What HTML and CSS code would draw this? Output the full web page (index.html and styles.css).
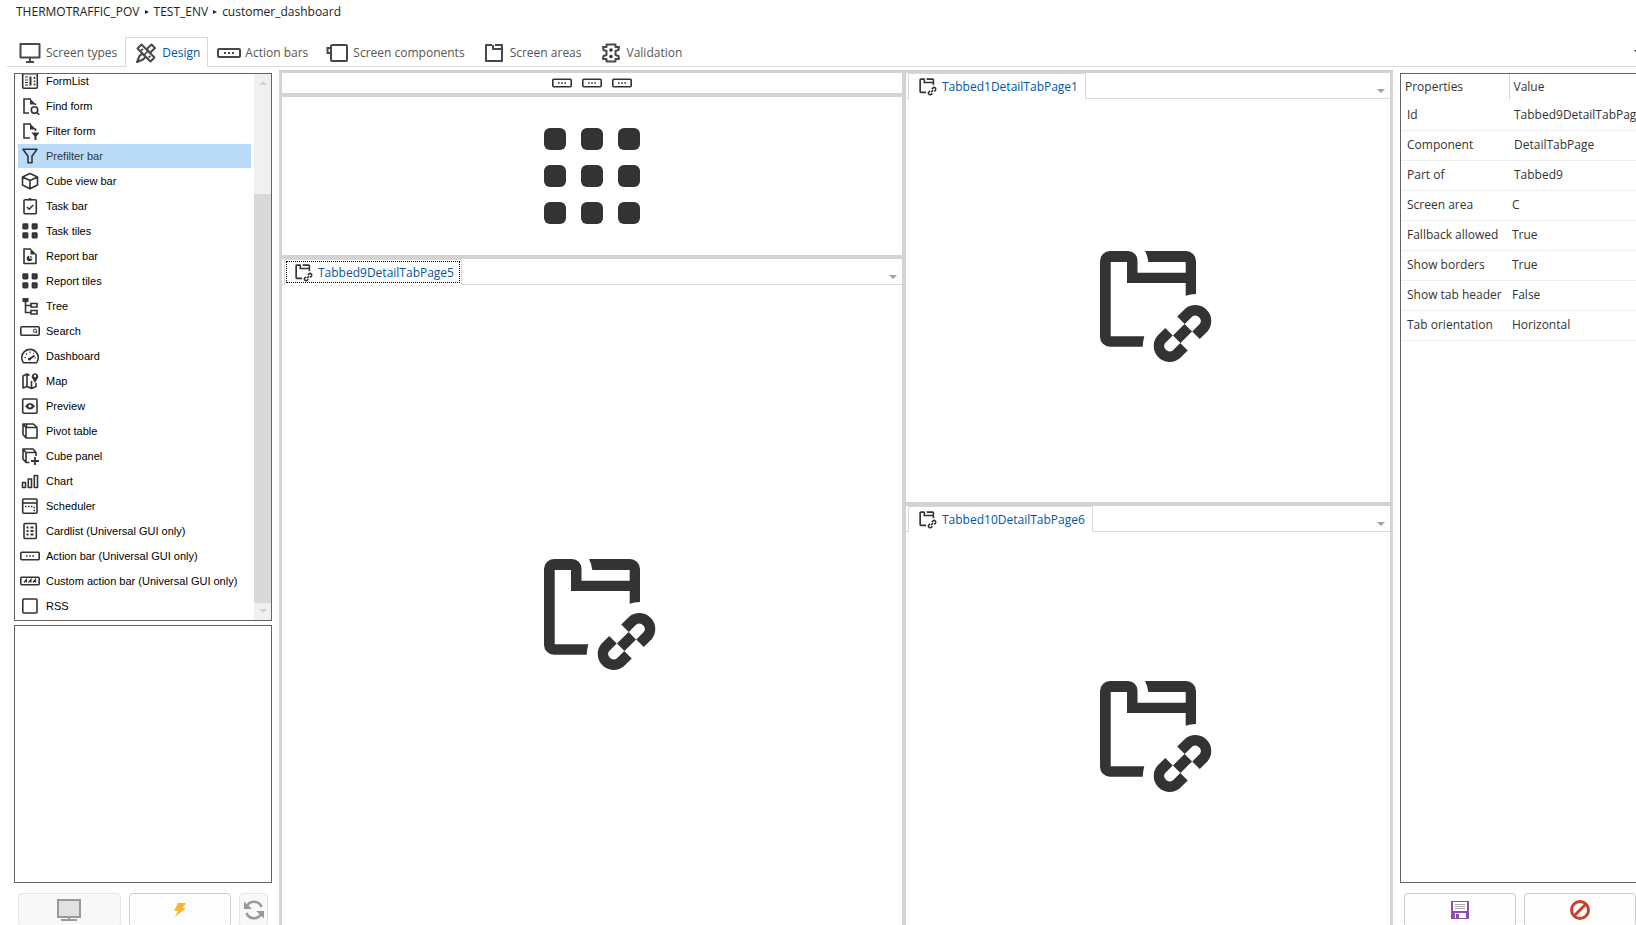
FILE: index.html
```html
<!DOCTYPE html>
<html lang="en">

<head>
    <meta charset="utf-8">
    <title>customer_dashboard</title>
    <meta name="viewport" content="width=device-width, initial-scale=1">
    <link rel="stylesheet" href="styles.css">
</head>

<body>
    <!-- icon sprite -->
    <svg class="sprite" aria-hidden="true">
        <symbol id="i-monitor" viewBox="0 0 24 24"><path d="M2.500 3h19v13.500h-19z" stroke-width="2" stroke-linejoin="round"/><path d="M12 17v4M8 21h8" stroke-width="2"/></symbol>
        <symbol id="i-design" viewBox="0 0 24 24"><path d="M17.500 3.500l3.500 3.500L9 18.500l-6 2.500 2.500-6z" stroke-width="2" stroke-linejoin="round"/><path d="M3.500 7.500l4-4 13 13-4 4z" fill="#fff" stroke-width="2" stroke-linejoin="round"/><path d="M7 9.500L9 8M14.500 16.500l2-1.500M9 15l6-6" stroke-width="1.600"/></symbol>
        <symbol id="i-actions" viewBox="0 0 24 24"><rect x="1" y="8" width="22" height="8" rx="1" stroke-width="2"/><path d="M7 12h2M11 12h2M15 12h2" stroke-width="2"/></symbol>
        <symbol id="i-components" viewBox="0 0 24 24"><rect x="6" y="4" width="16" height="16" rx="1" stroke-width="2"/><path d="M6 7H2.500v5H6" stroke-width="2"/></symbol>
        <symbol id="i-areas" viewBox="0 0 24 24"><path d="M10 4H4v16h16V8h-9V4M13 4h7v4" stroke-width="2" stroke-linejoin="round"/></symbol>
        <symbol id="i-validation" viewBox="0 0 24 24"><path d="M7.500 3.500h9V6H20l-.5 3-3 1v4l3 1 .5 3h-3.500v2.500h-9V18H4l.5-3 3-1v-4l-3-1L4 6h3.500z" stroke-width="2" stroke-linejoin="round"/><circle cx="12" cy="9" r="1.800" class="solid"/><circle cx="12" cy="15.500" r="1.800" class="solid"/></symbol>

        <symbol id="i-formlist" viewBox="0 0 20 20"><rect x="2.700" y="2.700" width="14.600" height="14.600" rx="1"/><path d="M5 6h3M5 9h3M5 11.500h3M5 14h3" stroke-width="1.200"/><path d="M10.500 5.500v9" stroke-width="2"/><path d="M14.500 6v2M14.500 9.500v1.500M14.500 12.500v2"/></symbol>
        <symbol id="i-find" viewBox="0 0 20 20"><path d="M9 17H4V3h7M15.500 7.500V9"/><path d="M10 2.500l6 6h-6z" class="solid"/><circle cx="14.500" cy="14" r="3.200"/><path d="M17 16.500l2.300 2.300"/></symbol>
        <symbol id="i-filterform" viewBox="0 0 20 20"><path d="M10 17H4V3h7M15.500 7.500V10"/><path d="M10 2.500l6 6h-6z" class="solid"/><path d="M11.500 11.500h8l-3 4v3.500h-2v-3.500z" class="solid"/></symbol>
        <symbol id="i-funnel" viewBox="0 0 20 20"><path d="M3 3.200h14l-5 7v6.600H8v-6.600z" stroke-linejoin="round"/></symbol>
        <symbol id="i-cube" viewBox="0 0 20 20"><path d="M10 2.500l7.500 3.500v8L10 17.800 2.500 14V6zM2.500 6L10 9.500 17.500 6M10 9.500v8" stroke-linejoin="round"/></symbol>
        <symbol id="i-task" viewBox="0 0 20 20"><rect x="4" y="3.700" width="12.300" height="14" rx="1"/><path d="M7.500 3.500h5M10 2v2"/><path d="M7 11l2.200 2.200L13.200 9"/></symbol>
        <symbol id="i-tiles" viewBox="0 0 20 20"><path d="M3.700 3.700H7V7H3.700zM13 3.700h3.300V7H13zM3.700 12.700H7V16H3.700zM13 12.700h3.300V16H13z" stroke-width="2.800" stroke-linejoin="round"/></symbol>
        <symbol id="i-report" viewBox="0 0 20 20"><path d="M11 3H4v14.500h12V8" stroke-linejoin="round"/><path d="M10.500 2.500l6 6h-6z" class="solid"/><circle cx="9.500" cy="12.500" r="2.800" class="solid"/><path d="M9.800 12.200V9.500M9.800 12.200h3" stroke="#fff" stroke-width="1"/></symbol>
        <symbol id="i-tree" viewBox="0 0 20 20"><path d="M2.500 2h6v4h-6z" class="solid"/><path d="M5.500 5v11.500H11M5.500 9.500H11M11 7.500h6v3.500h-6zM11 14.500h6V18h-6z"/></symbol>
        <symbol id="i-search" viewBox="0 0 20 20"><rect x=".8" y="5.800" width="18.400" height="8.500" rx="1"/><circle cx="15" cy="9.700" r="1.600" stroke-width="1"/><path d="M16 11l1.200 1.200" stroke-width="1"/></symbol>
        <symbol id="i-gauge" viewBox="0 0 20 20"><path d="M3.500 16.800A8.300 8.300 0 1 1 16.500 16.800z" stroke-linejoin="round"/><path d="M9 13.500l5.500-4" stroke-width="2"/><circle cx="9.500" cy="13" r="1.500" class="solid"/><path d="M4.500 11.500h1.500M6 7.500l1 1M10 5.500V7M14 7l-.7.700M14.500 12h1.500" stroke-width="1.200"/></symbol>
        <symbol id="i-map" viewBox="0 0 20 20"><path d="M9.500 4.500L7 3 3 5v12l4-1.500 4.500 2 4.500-2V12M7 3v12.500M11.500 10v7.500" stroke-linejoin="round"/><path d="M15 12l-2.600-4.500a3.200 3.200 0 1 1 5.200 0z" class="solid"/><circle cx="15" cy="5" r="1.200" fill="#fff" stroke="none"/></symbol>
        <symbol id="i-preview" viewBox="0 0 20 20"><rect x="2.700" y="3" width="14.300" height="14.300" rx="1"/><path d="M5 10.200q5-6.500 10 0q-5 6.500-10 0z" class="solid"/><circle cx="10" cy="10.200" r="1.400" fill="#fff" stroke="none"/></symbol>
        <symbol id="i-pivot" viewBox="0 0 20 20"><path d="M6 6.500h11V17H6zM6 17l-3-3.500V3l3 3.500M3 3h10.500L17 6.500M6.500 3v3" stroke-linejoin="round"/></symbol>
        <symbol id="i-cubepanel" viewBox="0 0 20 20"><path d="M9.500 16.500H6v-10h10V10M6 16.500L3 13V3l3 3.500M3 3h10l3 3.500" stroke-linejoin="round"/><path d="M15 11v8M11 15h8" stroke-width="1.800"/></symbol>
        <symbol id="i-chart" viewBox="0 0 20 20"><path d="M2.500 11.500h3v5h-3zM8.300 8h3.200v8.500H8.300zM14.300 4.500h3.200v12h-3.200z" stroke-linejoin="round"/></symbol>
        <symbol id="i-scheduler" viewBox="0 0 20 20"><rect x="2.700" y="3" width="14.300" height="14.300" rx="1"/><path d="M3 7h14"/><path d="M5 10.500h1.500M8 10.500h1.500M11 10.500h1.500M13.500 11.500h1.500M13.500 14.500h1.500"/></symbol>
        <symbol id="i-cardlist" viewBox="0 0 20 20"><rect x="4" y="2.500" width="12.300" height="15" rx="1"/><path d="M6.500 6.500h2M6.500 10h2M6.500 13.500h2M10.500 6.500h3M10.500 10h3M10.500 13.500h3" stroke-width="1.800"/></symbol>
        <symbol id="i-bar" viewBox="0 0 20 20"><rect x=".8" y="6.200" width="18.400" height="7.600" rx="1"/><path d="M6 10h1.600M9.200 10h1.600M12.400 10H14"/></symbol>
        <symbol id="i-custombar" viewBox="0 0 20 20"><rect x=".8" y="6.200" width="18.400" height="7.600" rx="1"/><path d="M4 11.500l2.500-3v3M8.500 11.500l2.500-3v3M13 11.500l2.500-3v3" stroke-width="1.200"/></symbol>
        <symbol id="i-box" viewBox="0 0 20 20"><rect x="2.800" y="3" width="14.200" height="14" rx="1"/></symbol>

        <symbol id="i-tabpage" viewBox="0 0 128 128">
            <path class="solid" d="M26 16H44a9.500 9.500 0 0 1 9.500 9.500V37.700H101.700V27H64.300Q63.700 21 61 16H102a10 10 0 0 1 10 10V59Q106 59.300 101.700 60.700V48H43V27H26.700V101.300H60.300Q59 106 58.700 111.700H26a10 10 0 0 1-10-10V26a10 10 0 0 1 10-10z"/>
            <path d="M97 85.300l7.500-7.500A10.650 10.650 0 0 1 119.500 92.800L112 100.300M100 111.700l-7.500 7.500A10.650 10.650 0 0 1 77.500 104.200L85 96.700M104.300 92.700L92.700 104.300" stroke-width="10.600"/>
        </symbol>
        <symbol id="i-grid" viewBox="0 0 96 96">
            <g class="solid"><rect width="22" height="22" rx="6"/><rect x="37" width="22" height="22" rx="6"/><rect x="74" width="22" height="22" rx="6"/><rect y="37" width="22" height="22" rx="6"/><rect x="37" y="37" width="22" height="22" rx="6"/><rect x="74" y="37" width="22" height="22" rx="6"/><rect y="74" width="22" height="22" rx="6"/><rect x="37" y="74" width="22" height="22" rx="6"/><rect x="74" y="74" width="22" height="22" rx="6"/></g>
        </symbol>
    </svg>

    <div class="page">
        <nav class="breadcrumb">
            <a href="#">THERMOTRAFFIC_POV</a>
            <a href="#">TEST_ENV</a>
            <a href="#">customer_dashboard</a>
        </nav>

        <div class="tabs">
            <button class="tab"><svg class="icon"><use href="#i-monitor"/></svg>Screen types</button>
            <button class="tab active"><svg class="icon"><use href="#i-design"/></svg>Design</button>
            <button class="tab"><svg class="icon"><use href="#i-actions"/></svg>Action bars</button>
            <button class="tab"><svg class="icon"><use href="#i-components"/></svg>Screen components</button>
            <button class="tab"><svg class="icon"><use href="#i-areas"/></svg>Screen areas</button>
            <button class="tab"><svg class="icon"><use href="#i-validation"/></svg>Validation</button>
            <button class="tabs-more" aria-label="More tabs"></button>
        </div>

        <main class="workspace">
            <aside class="toolbox">
                <div class="component-box">
                    <ul class="component-list">
                        <li><svg><use href="#i-formlist"/></svg>FormList</li>
                        <li><svg><use href="#i-find"/></svg>Find form</li>
                        <li><svg><use href="#i-filterform"/></svg>Filter form</li>
                        <li class="selected"><svg><use href="#i-funnel"/></svg>Prefilter bar</li>
                        <li><svg><use href="#i-cube"/></svg>Cube view bar</li>
                        <li><svg><use href="#i-task"/></svg>Task bar</li>
                        <li><svg><use href="#i-tiles"/></svg>Task tiles</li>
                        <li><svg><use href="#i-report"/></svg>Report bar</li>
                        <li><svg><use href="#i-tiles"/></svg>Report tiles</li>
                        <li><svg><use href="#i-tree"/></svg>Tree</li>
                        <li><svg><use href="#i-search"/></svg>Search</li>
                        <li><svg><use href="#i-gauge"/></svg>Dashboard</li>
                        <li><svg><use href="#i-map"/></svg>Map</li>
                        <li><svg><use href="#i-preview"/></svg>Preview</li>
                        <li><svg><use href="#i-pivot"/></svg>Pivot table</li>
                        <li><svg><use href="#i-cubepanel"/></svg>Cube panel</li>
                        <li><svg><use href="#i-chart"/></svg>Chart</li>
                        <li><svg><use href="#i-scheduler"/></svg>Scheduler</li>
                        <li><svg><use href="#i-cardlist"/></svg>Cardlist (Universal GUI only)</li>
                        <li><svg><use href="#i-bar"/></svg>Action bar (Universal GUI only)</li>
                        <li><svg><use href="#i-custombar"/></svg>Custom action bar (Universal GUI only)</li>
                        <li><svg><use href="#i-box"/></svg>RSS</li>
                    </ul>
                    <div class="scrollbar">
                        <span class="scroll-arrow up"></span>
                        <span class="scroll-thumb"></span>
                        <span class="scroll-arrow down"></span>
                    </div>
                </div>
                <div class="detail-box"></div>
                <div class="button-row">
                    <button class="tool-button wide disabled" aria-label="Screen" disabled>
                        <svg width="24" height="24" viewBox="0 0 24 24"><path d="M1 2h22v17H1z" fill="#e1e1e1" stroke="#999" stroke-width="2"/><path d="M12 19v2M4 22h16" stroke="#999" stroke-width="2"/></svg>
                    </button>
                    <button class="tool-button wide" aria-label="Run">
                        <svg width="14" height="16" viewBox="0 0 14 16"><path d="M5 1h8L9.500 6H13L2 15l3-6H1z" fill="#fdb233"/></svg>
                    </button>
                    <button class="tool-button small disabled" aria-label="Refresh" disabled>
                        <svg width="22" height="22" viewBox="0 0 22 22"><path d="M3.500 8A8 8 0 0 1 18.500 8M18.500 14A8 8 0 0 1 3.500 14" fill="none" stroke="#999" stroke-width="2.600"/><path d="M1 2.500V10h8zM21 19.500V12h-8z" fill="#999"/></svg>
                    </button>
                </div>
            </aside>

            <section class="canvas">
                <div class="canvas-column left">
                    <div class="area bars">
                        <svg class="bar-icon"><use href="#i-bar"/></svg>
                        <svg class="bar-icon"><use href="#i-bar"/></svg>
                        <svg class="bar-icon"><use href="#i-bar"/></svg>
                    </div>
                    <div class="area"><svg class="grid-icon"><use href="#i-grid"/></svg></div>
                    <div class="area tabbed">
                        <div class="area-tabs">
                            <button class="area-tab focused"><svg viewBox="14 14 116 116"><use href="#i-tabpage" width="128" height="128"/></svg>Tabbed9DetailTabPage5</button>
                            <div class="area-strip"><span class="caret"></span></div>
                        </div>
                        <div class="area-body"><svg class="big-icon"><use href="#i-tabpage"/></svg></div>
                    </div>
                </div>
                <div class="canvas-column right">
                    <div class="area tabbed">
                        <div class="area-tabs">
                            <button class="area-tab"><svg viewBox="14 14 116 116"><use href="#i-tabpage" width="128" height="128"/></svg>Tabbed1DetailTabPage1</button>
                            <div class="area-strip"><span class="caret"></span></div>
                        </div>
                        <div class="area-body"><svg class="big-icon"><use href="#i-tabpage"/></svg></div>
                    </div>
                    <div class="area tabbed">
                        <div class="area-tabs">
                            <button class="area-tab"><svg viewBox="14 14 116 116"><use href="#i-tabpage" width="128" height="128"/></svg>Tabbed10DetailTabPage6</button>
                            <div class="area-strip"><span class="caret"></span></div>
                        </div>
                        <div class="area-body"><svg class="big-icon"><use href="#i-tabpage"/></svg></div>
                    </div>
                </div>
            </section>

            <aside class="properties">
                <div class="properties-box">
                    <table class="properties-table">
                        <thead>
                            <tr><th>Properties</th><th>Value</th></tr>
                        </thead>
                        <tbody>
                            <tr><td>Id</td><td class="text-value">Tabbed9DetailTabPag</td></tr>
                            <tr><td>Component</td><td class="text-value">DetailTabPage</td></tr>
                            <tr><td>Part of</td><td class="text-value">Tabbed9</td></tr>
                            <tr><td>Screen area</td><td>C</td></tr>
                            <tr><td>Fallback allowed</td><td>True</td></tr>
                            <tr><td>Show borders</td><td>True</td></tr>
                            <tr><td>Show tab header</td><td>False</td></tr>
                            <tr><td>Tab orientation</td><td>Horizontal</td></tr>
                        </tbody>
                    </table>
                </div>
                <div class="button-row">
                    <button class="tool-button wide" aria-label="Save">
                        <svg width="18" height="18" viewBox="0 0 18 18"><path d="M0 0h18v18H0z" fill="#8e4db0"/><path d="M2 1h14v9H2zM4 12h11v5H4z" fill="#fff"/><path d="M4 3h10v1H4zM4 5h10v1H4zM4 7h10v1H4z" fill="#aaa"/><path d="M5 13h3v4H5z" fill="#8e4db0"/></svg>
                    </button>
                    <button class="tool-button wide" aria-label="Cancel">
                        <svg width="20" height="20" viewBox="0 0 20 20"><circle cx="10" cy="10" r="8.500" fill="none" stroke="#c9412b" stroke-width="3"/><path d="M4.500 15.500l11-11" stroke="#c9412b" stroke-width="3"/></svg>
                    </button>
                </div>
            </aside>
        </main>
    </div>
</body>

</html>
```
FILE: styles.css
```css
* {
    box-sizing: border-box;
}

body {
    margin: 0;
    height: 100vh;
    overflow: hidden;
    background: #fff;
    color: #333;
    font-family: "Open Sans", "Noto Sans", sans-serif;
    font-size: 12px;
    line-height: 16px;
}

button {
    margin: 0;
    padding: 0;
    border: 0;
    background: none;
    color: inherit;
    font: inherit;
    white-space: nowrap;
}

svg {
    flex: none;
    fill: none;
    stroke: #333;
    stroke-width: 1.6;
}

.sprite {
    display: none;
}

.solid {
    fill: #333;
    stroke: none;
}

.button-row svg {
    stroke: none;
}

/* runs a little below the window edge */
.page {
    display: flex;
    flex-direction: column;
    height: calc(100vh + 4px);
}

/* Breadcrumb */
.breadcrumb {
    display: flex;
    height: 37px;
    padding: 4px 16px;
}

.breadcrumb a {
    display: flex;
    align-items: center;
    height: 16px;
    color: #222;
    text-decoration: none;
}

.breadcrumb a + a::before {
    content: "";
    margin: 0 5px;
    border-left: 4px solid #222;
    border-top: 2px solid transparent;
    border-bottom: 2px solid transparent;
}

/* Tabs */
.tabs {
    display: flex;
    height: 30px;
    margin-left: 7px;
    padding-left: 2px;
    box-shadow: inset 0 -1px #d9d9d9;
    color: #555;
}

.tab {
    display: flex;
    align-items: center;
    gap: 4px;
    padding: 0 7px 0 8px;
    border: 1px solid transparent;
    border-bottom: 0;
}

.tab.active {
    border-color: #d9d9d9;
    background: #fff;
    color: #0055a5;
}

.tab .icon {
    width: 24px;
    height: 24px;
    stroke: #484848;
}

.tabs-more {
    align-self: center;
    margin-left: auto;
    margin-right: -6px;
    border-top: 4px solid #222;
    border-left: 4px solid transparent;
    border-right: 4px solid transparent;
}

/* Workspace */
.workspace {
    display: flex;
    flex: 1;
    min-height: 0;
    padding: 3px 0 0 14px;
}

.toolbox {
    display: flex;
    flex-direction: column;
    width: 258px;
    padding-top: 3px;
}

.component-box {
    display: flex;
    flex: 548 1 0;
    min-height: 0;
    border: 1px solid #646464;
}

.component-list {
    display: flex;
    flex: 1;
    flex-direction: column;
    justify-content: flex-end;
    gap: 1px;
    margin: 0;
    padding: 0 3px 2px;
    overflow: hidden;
    list-style: none;
    color: #000;
    font-family: "Liberation Sans", Arial, sans-serif;
    font-size: 11px;
}

.component-list li {
    display: flex;
    flex: none;
    align-items: center;
    gap: 6px;
    height: 24px;
    padding-left: 2px;
    white-space: nowrap;
}

.component-list li.selected {
    background: #badcf9;
    color: #333;
}

.component-list svg {
    width: 20px;
    height: 20px;
}

.scrollbar {
    display: flex;
    flex-direction: column;
    width: 17px;
    background: #f0f0f0;
}

.scroll-arrow {
    display: flex;
    align-items: center;
    justify-content: center;
    height: 17px;
}

.scroll-arrow::before {
    content: "";
    border: 4px solid transparent;
}

.scroll-arrow.up::before {
    border-top: 0;
    border-bottom-color: #d0d0d0;
}

.scroll-arrow.down::before {
    border-bottom: 0;
    border-top-color: #d0d0d0;
}

.scroll-thumb {
    height: 75%;
    margin-top: auto;
    background: #d9d9d9;
}

.detail-box {
    flex: 257 1 0;
    margin-top: 4px;
    border: 1px solid #646464;
}

.button-row {
    display: flex;
    gap: 8px;
    padding: 10px 4px 2px;
}

.tool-button {
    display: flex;
    justify-content: center;
    align-items: center;
    height: 34px;
    border: 1px solid #ccc;
    border-radius: 4px;
    background: #fdfdfd;
}

.tool-button.wide {
    flex: 1;
}

.tool-button.small {
    width: 29px;
}

.tool-button.disabled {
    border-color: #e6e6e6;
    background: #f8f8f8;
}

/* Canvas, the grey shows through as splitters */
.canvas {
    display: grid;
    flex: 1;
    grid-template-columns: 620fr 484fr;
    gap: 4px;
    min-width: 0;
    margin: 0 7px;
    padding: 3px 3px 0;
    background: #d3d3d3;
}

.canvas-column {
    display: grid;
    gap: 4px;
    min-height: 0;
}

.canvas-column.left {
    grid-template-rows: 20px 158px 1fr;
}

.canvas-column.right {
    grid-template-rows: 429fr 423fr;
}

.area {
    display: flex;
    align-items: center;
    justify-content: center;
    min-height: 0;
    background: #fff;
}

.area.bars {
    gap: 10px;
}

.bar-icon {
    width: 20px;
    height: 20px;
}

.grid-icon {
    width: 96px;
    height: 96px;
}

.big-icon {
    width: 128px;
    height: 128px;
}

.area.tabbed {
    flex-direction: column;
    align-items: stretch;
}

.area-tabs {
    display: flex;
    height: 26px;
    padding-left: 2px;
    box-shadow: inset 0 -1px #d9d9d9;
}

.area-tab {
    display: flex;
    align-items: center;
    gap: 5px;
    padding: 0 7px 0 10px;
    border: 1px solid #d9d9d9;
    border-bottom: 0;
    background: #fff;
    color: #0055a5;
}

.area-tab.focused {
    outline: 1px dotted #000;
    outline-offset: -3px;
}

.area-tab svg {
    width: 18px;
    height: 18px;
}

.area-strip {
    display: flex;
    flex: 1;
    align-items: flex-end;
    justify-content: flex-end;
    padding: 0 5px 6px;
}

.caret {
    border-top: 4px solid #a0a0a0;
    border-left: 4px solid transparent;
    border-right: 4px solid transparent;
}

.area-body {
    display: flex;
    flex: 1;
    align-items: center;
    justify-content: center;
}

.right .area-body {
    padding-bottom: 3px;
}

/* Properties */
.properties {
    display: flex;
    flex-direction: column;
    width: 236px;
    padding-top: 3px;
}

.properties-box {
    flex: 1;
    border: 1px solid #646464;
    border-right: 0;
}

.properties .button-row {
    padding-right: 0;
}

.properties-table {
    width: 100%;
    border-collapse: collapse;
    table-layout: fixed;
}

.properties-table th {
    height: 26px;
    padding: 0 4px;
    font-weight: normal;
    text-align: left;
}

.properties-table th:first-child {
    width: 108px;
    border-right: 1px solid #d9d9d9;
}

.properties-table td {
    height: 30px;
    padding: 0 3px;
    border-bottom: 1px solid #eee;
    overflow: hidden;
    white-space: nowrap;
}

.properties-table td:first-child {
    padding-left: 6px;
}

.properties-table td.text-value {
    padding-left: 5px;
}
```
